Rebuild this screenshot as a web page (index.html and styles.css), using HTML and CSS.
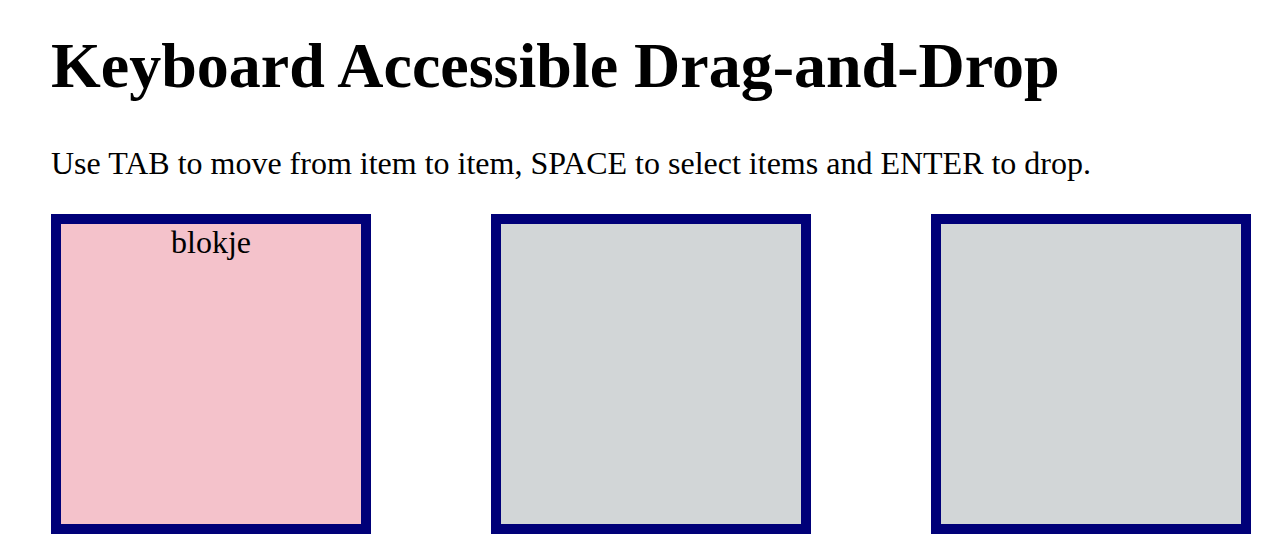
FILE: index.html
```html
<!DOCTYPE html>
<html lang="en">
<head>
<meta charset="utf-8">
<title>Keyboard Accessible Drag-and-Drop</title>
<link rel="stylesheet" href="styles.css">
</head>
<body>
<h1 class="title">Keyboard Accessible Drag-and-Drop</h1>
<p class="intro">Use TAB to move from item to item, SPACE to select items and ENTER to drop.</p>
<div class="zones">
  <div class="zone" tabindex="0"><div class="item" tabindex="0">blokje</div></div>
  <div class="zone" tabindex="0"></div>
  <div class="zone" tabindex="0"></div>
</div>
</body>
</html>
```
FILE: styles.css
```css
html, body {
  margin: 0;
  background: #ffffff;
}
body {
  padding: 29px 0 0 51px;
  font-family: "Liberation Serif", "Times New Roman", serif;
  color: #000000;
}
.title {
  font-size: 64px;
  font-weight: bold;
  line-height: normal;
  margin: 0 0 42px 0;
}
.intro {
  font-size: 32px;
  line-height: normal;
  margin: 0 0 32px 0;
}
.zones {
  display: flex;
  gap: 120px;
}
.zone {
  width: 300px;
  height: 300px;
  border: 10px solid #000078;
  background: #d2d6d7;
  flex: none;
  outline: none;
}
.item {
  height: 100%;
  background: #f4c2cb;
  font-size: 32px;
  line-height: normal;
  text-align: center;
  outline: none;
}
```
